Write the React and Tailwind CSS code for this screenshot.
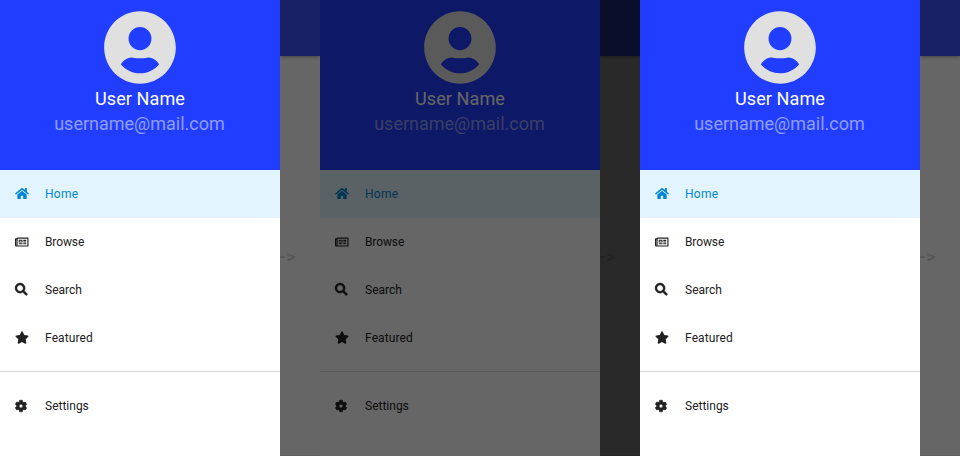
import React from "react";
import { FaHome, FaRegNewspaper, FaSearch, FaStar, FaCog } from "react-icons/fa";

const items = [
  { label: "Home", Icon: FaHome, size: "h-[13px] w-3.5", spacing: "tracking-[0.02em]", active: true },
  { label: "Browse", Icon: FaRegNewspaper, size: "h-3 w-[13.5px]", spacing: "tracking-[-0.01em]" },
  { label: "Search", Icon: FaSearch, size: "h-[12.5px] w-[12.5px] stroke-current stroke-[16px]", spacing: "tracking-normal" },
  { label: "Featured", Icon: FaStar, size: "h-[13px] w-3.5", spacing: "tracking-[0.01em]" },
];

function Row({ label, Icon, size, spacing, active }) {
  return (
    <li
      className={
        active
          ? "flex h-12 items-center bg-[#e1f4ff] pl-[15px] text-[#0288d1]"
          : "flex h-12 items-center pl-[15px] text-[#212121]"
      }
    >
      <span className="flex w-[30px] items-center">
        <Icon className={`-mt-px overflow-visible ${size}`} />
      </span>
      <span className={`text-xs leading-4 ${spacing}`}>{label}</span>
    </li>
  );
}

function Drawer() {
  return (
    <aside className="h-full w-[280px] shrink-0 bg-white">
      <header className="flex h-[170px] flex-col items-center bg-[#213dff] pt-1">
        <svg viewBox="0 0 24 24" preserveAspectRatio="none" className="h-[87px] w-[86px] shrink-0 text-[#e0e0e0]" fill="currentColor">
          <path d="M12 2C6.48 2 2 6.48 2 12s4.48 10 10 10 10-4.48 10-10S17.52 2 12 2zm0 4.35a3.2 3.2 0 1 1 0 6.4 3.2 3.2 0 0 1 0-6.4zM12 19.1c-2.2 0-4.1-1-5.35-2.5.9-1.3 2.1-1.95 3.35-1.8 1.4.2 2.6.2 4 0 1.25-.15 2.45.5 3.35 1.8C16.1 18.1 14.2 19.1 12 19.1z" />
        </svg>
        <div className="-mt-[5px] text-lg leading-[25px] tracking-[0.005em] text-white">User Name</div>
        <div className="mr-px text-lg leading-[25px] text-white/50">username@mail.com</div>
      </header>
      <nav>
        <ul>
          {items.map((item) => (
            <Row key={item.label} {...item} />
          ))}
        </ul>
        <hr className="mt-[9px] mb-[10px] border-t border-[#d6d6d6]" />
        <ul>
          <Row label="Settings" Icon={FaCog} size="h-3 w-3 stroke-current stroke-[28px]" spacing="tracking-normal" />
        </ul>
      </nav>
    </aside>
  );
}

function PageEdge() {
  return (
    <div className="flex h-full w-10 shrink-0 flex-col overflow-hidden bg-[#666666]">
      <div className="h-14 shrink-0 bg-[#182166] shadow-[0_1px_3px_rgba(0,0,0,0.3)]" />
      <div className="mt-[188px] -ml-px text-lg font-medium leading-[25px] tracking-[0.06em] text-[#565656]">-&gt;</div>
      <div className="mt-auto h-px shrink-0 bg-[#615b62]" />
    </div>
  );
}

function Screen({ dimmed }) {
  return (
    <section className="relative flex h-full w-80 shrink-0">
      <Drawer />
      <PageEdge />
      {dimmed && <div className="absolute inset-0 bg-black/60" />}
    </section>
  );
}

export default function App() {
  return (
    <main className="flex h-[456px] w-[960px] overflow-hidden font-['Roboto',sans-serif]">
      <Screen />
      <Screen dimmed />
      <Screen />
    </main>
  );
}
